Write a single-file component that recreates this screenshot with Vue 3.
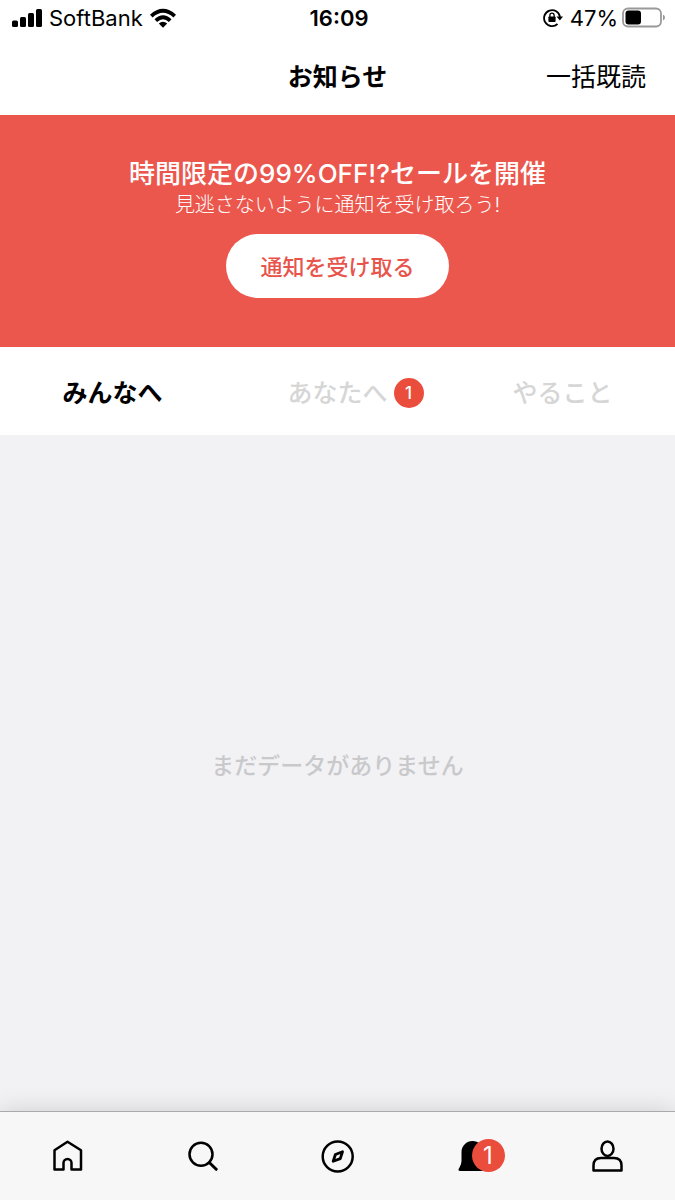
<script setup>
import { ref } from 'vue'

const tabs = [
  { id: 'all', label: 'みんなへ', count: 0 },
  { id: 'you', label: 'あなたへ', count: 1 },
  { id: 'todo', label: 'やること', count: 0 },
]
const activeTab = ref('all')
const unread = ref(1)
</script>

<template>
  <div class="screen">
    <div class="status">
      <div class="carrier">
        <svg width="31" height="20" viewBox="0 0 31 20" aria-hidden="true">
          <rect x="0" y="12.500" width="6" height="6.500" rx="1.500" />
          <rect x="8" y="9" width="6" height="10" rx="1.500" />
          <rect x="16" y="5" width="6" height="14" rx="1.500" />
          <rect x="24" y="1" width="6" height="18" rx="1.500" />
        </svg>
        <span>SoftBank</span>
        <svg width="28" height="20" viewBox="0 0 28 20" aria-hidden="true">
          <path d="M1 6.700Q14 -5 27 6.700L24.400 9.400Q14 .300 3.600 9.400Z" />
          <path d="M5.500 11.200Q14 3.500 22.500 11.200L19.900 13.900Q14 8.700 8.100 13.900Z" />
          <path d="M9.800 15.600Q14 12 18.200 15.600L14 19.800Z" />
        </svg>
      </div>
      <div class="clock">16:09</div>
      <div class="power">
        <svg width="20" height="20" viewBox="0 0 20 20" aria-hidden="true">
          <path d="M14.500 16A8 8 0 1 1 17 9" fill="none" stroke="#000" stroke-width="1.800" />
          <path d="M13.500 8.600H20L16.900 12.600Z" />
          <rect x="5.400" y="8.500" width="7.200" height="5.500" rx=".8" />
          <path d="M6.900 9V7.300a2.100 2.100 0 0 1 4.200 0V9" fill="none" stroke="#000" stroke-width="1.300" />
        </svg>
        <span>47%</span>
        <svg width="44" height="22" viewBox="0 0 44 22" aria-hidden="true">
          <rect x="1" y="1.500" width="38" height="18" rx="5" fill="none" stroke="#999" stroke-width="1.800" />
          <rect x="3.500" y="3.500" width="15.500" height="14" rx="3" />
          <path d="M41 7.500Q43 8.500 43 10.500T41 13.500Z" fill="#999" />
        </svg>
      </div>
    </div>

    <header class="header">
      <h1>お知らせ</h1>
      <button class="read-all" type="button" @click="unread = 0">一括既読</button>
    </header>

    <section class="banner">
      <h2>時間限定の99%OFF!?セールを開催</h2>
      <p>見逃さないように通知を受け取ろう!</p>
      <button type="button">通知を受け取る</button>
    </section>

    <div class="tabs" role="tablist">
      <button
        v-for="tab in tabs"
        :key="tab.id"
        type="button"
        role="tab"
        :aria-selected="activeTab === tab.id"
        :class="['tab', { active: activeTab === tab.id }]"
        @click="activeTab = tab.id"
      >
        <span class="tab-label">{{ tab.label }}<span v-if="tab.count" class="tab-badge">{{ tab.count }}</span></span>
      </button>
    </div>

    <main class="content">
      <p>まだデータがありません</p>
    </main>

    <nav class="nav">
      <a href="#home" aria-label="ホーム">
        <svg width="34" height="34" viewBox="0 0 34 34">
          <path d="M16.500 2.700 30 11.200V30.500H20.500V24a4 4 0 0 0-8 0V30.500H3.500V11.200Z" />
        </svg>
      </a>
      <a href="#search" aria-label="検索">
        <svg width="34" height="34" viewBox="0 0 34 34">
          <circle cx="15" cy="15.300" r="11.500" />
          <path d="M23.300 23.500 30.200 30.300" stroke-width="3" />
        </svg>
      </a>
      <a href="#explore" aria-label="探す">
        <svg width="34" height="34" viewBox="0 0 34 34">
          <circle cx="16.700" cy="17.500" r="15" />
          <path d="M21.500 12.800 19.300 19.600 12.200 22.300 14.400 15.500Z" stroke-width="2.800" />
        </svg>
      </a>
      <a href="#notifications" aria-label="お知らせ">
        <span class="bell">
          <svg width="34" height="34" viewBox="0 0 34 34">
            <path class="solid" d="M5.500 13a11 11 0 0 1 22 0v9q0 3 2.300 6.500l1.200 1.700q.5 1.800-1.500 1.800H4q-2 0-1.500-1.800l1-1.700q2-3.500 2-6.500Z" />
          </svg>
          <span v-if="unread" class="nav-badge">{{ unread }}</span>
        </span>
      </a>
      <a href="#profile" aria-label="マイページ">
        <svg width="34" height="34" viewBox="0 0 34 34">
          <ellipse cx="16.500" cy="9.700" rx="6" ry="7.200" />
          <path d="M2.500 31.500V26.500q0-7.500 7.500-7.500h13q7.500 0 7.500 7.500v5Z" />
        </svg>
      </a>
    </nav>
  </div>
</template>

<style>
body {
  margin: 0;
}
</style>

<style scoped>
.screen {
  min-height: 100vh;
  display: flex;
  flex-direction: column;
  background: #f2f2f5;
  color: #000;
  font-family: Inter, "Noto Sans CJK JP", sans-serif;
}
h1,
h2,
p {
  margin: 0;
}
button {
  border: 0;
  padding: 0;
  background: none;
  color: inherit;
  font: inherit;
  cursor: pointer;
}
.status {
  display: grid;
  grid-template-columns: 1fr auto 1fr;
  align-items: center;
  height: 36px;
  padding: 0 9px 0 12px;
  background: #fff;
  font-size: 22px;
  line-height: 24px;
}
.carrier,
.power {
  display: flex;
  align-items: center;
  gap: 6px;
}
.power {
  justify-content: flex-end;
}
.power span {
  margin: 0 -2px 0 1px;
}
.clock {
  font-weight: 600;
}
.header {
  display: grid;
  grid-template-columns: 1fr auto 1fr;
  align-items: center;
  height: 77px;
  padding: 0 29px 2px;
  background: #fff;
  font-size: 25px;
}
.header h1 {
  grid-column: 2;
  font-size: 25px;
  font-weight: 700;
}
.read-all {
  justify-self: end;
}
.banner {
  display: flex;
  flex-direction: column;
  align-items: center;
  padding: 43px 20px 49px;
  background: #eb574d;
  color: #fff;
}
.banner h2 {
  font-size: 26px;
  line-height: 32px;
  font-weight: 500;
}
.banner p {
  margin-bottom: 14px;
  font-size: 20px;
  line-height: 30px;
  font-weight: 300;
}
.banner button {
  height: 64px;
  padding: 0 34px 2px;
  border-radius: 32px;
  background: #fff;
  color: #e8544b;
  font-size: 22px;
  font-weight: 500;
}
.tabs {
  display: grid;
  grid-template-columns: repeat(3, 1fr);
  height: 88px;
  background: #fff;
}
.tab {
  color: #d6d6d6;
  font-size: 25px;
  font-weight: 500;
}
.tab.active {
  color: #000;
  font-weight: 700;
}
.tab-label {
  position: relative;
}
.tab-badge {
  position: absolute;
  left: 100%;
  top: 50%;
  width: 30px;
  margin-left: 6px;
  border-radius: 50%;
  background: #eb4d3d;
  color: #fff;
  font-size: 17px;
  line-height: 30px;
  text-align: center;
  transform: translateY(-50%);
}
.content {
  flex: 1;
  display: flex;
  align-items: center;
  justify-content: center;
  padding-bottom: 18px;
  color: #c9c9cb;
  font-size: 23px;
  font-weight: 500;
}
.nav {
  display: grid;
  grid-template-columns: repeat(5, 1fr);
  height: 88px;
  border-top: 1px solid #aaa;
  background: #f7f7f7;
  box-shadow: 0 0 24px rgba(0, 0, 0, 0.15);
}
.nav a {
  display: flex;
  align-items: center;
  justify-content: center;
}
.nav svg {
  display: block;
  fill: none;
  stroke: #000;
  stroke-width: 2.500;
  stroke-linejoin: round;
  stroke-linecap: round;
}
.nav .solid {
  fill: #000;
  stroke: none;
}
.bell {
  position: relative;
}
.nav-badge {
  position: absolute;
  left: 16px;
  top: 0;
  width: 33px;
  border-radius: 50%;
  background: #eb4d3d;
  color: #fff;
  font-size: 24px;
  line-height: 33px;
  text-align: center;
}
</style>
